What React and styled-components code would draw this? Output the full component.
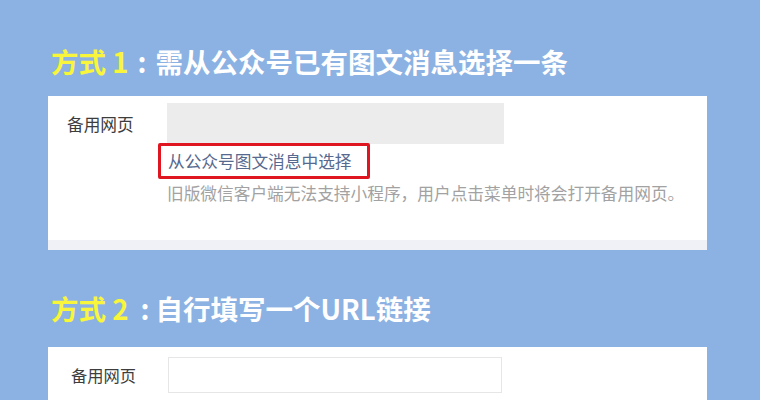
import React from 'react';
import styled, { createGlobalStyle } from 'styled-components';

const GlobalStyle = createGlobalStyle`
  html, body {
    margin: 0;
    padding: 0;
    background: #8bb2e2;
  }
  body {
    font-family: "Noto Sans CJK SC", "Noto Sans", sans-serif;
  }
`;

const Page = styled.div`
  width: 760px;
  height: 400px;
  overflow: hidden;
  box-sizing: border-box;
  padding-left: 48px;
  background: #8bb2e2;
`;

const Heading = styled.h2`
  margin: ${p => p.$top}px 0 ${p => p.$bottom}px 3px;
  height: 36px;
  line-height: 36px;
  font-size: 27.5px;
  font-weight: 700;
  color: #ffffff;
  white-space: nowrap;
`;

const Step = styled.span`
  color: #f8f53a;
`;

const Colon = styled.span`
  display: inline-block;
  margin: 0 ${p => p.$right}px 0 ${p => p.$left}px;
`;

const Card = styled.div`
  width: 659px;
  box-sizing: border-box;
  background: #ffffff;
  padding: ${p => p.$padTop}px 0 ${p => p.$padBottom}px ${p => p.$padLeft}px;
  border-bottom: ${p => (p.$strip ? '10px solid #eff1f6' : 'none')};
  display: grid;
  grid-template-columns: ${p => p.$labelWidth}px auto;
  align-items: center;
  justify-items: start;
`;

const Label = styled.div`
  font-size: ${p => p.$size}px;
  line-height: 22px;
  color: #3d3d3d;
`;

const Input = styled.div`
  width: ${p => p.$width}px;
  height: ${p => p.$height}px;
  box-sizing: border-box;
  background: ${p => (p.$filled ? '#ececec' : '#ffffff')};
  border: 1px solid ${p => (p.$filled ? '#ececec' : '#e6e6e6')};
`;

const Highlight = styled.div`
  grid-column: 2;
  margin: -1px 0 0 -9px;
  height: 36px;
  box-sizing: border-box;
  border: 3px solid #df1620;
  border-radius: 2px;
  padding: 0 15px 0 7px;
  display: flex;
  align-items: center;
`;

const Link = styled.span`
  font-size: 16.7px;
  color: #56698f;
  line-height: 28px;
`;

const Hint = styled.div`
  grid-column: 2;
  margin-top: 3px;
  font-size: 16.7px;
  line-height: 22px;
  color: #a2a2a2;
  white-space: nowrap;
`;

export default function App() {
  return (
    <Page>
      <GlobalStyle />
      <Heading $top={43} $bottom={17}>
        <Step>方式 1</Step>
        <Colon $left={9} $right={9}>:</Colon>需从公众号已有图文消息选择一条
      </Heading>
      <Card $padTop={7} $padBottom={36} $padLeft={19} $labelWidth={100} $strip>
        <Label $size={16.7}>备用网页</Label>
        <Input $width={337} $height={41} $filled />
        <Highlight>
          <Link>从公众号图文消息中选择</Link>
        </Highlight>
        <Hint>旧版微信客户端无法支持小程序，用户点击菜单时将会打开备用网页。</Hint>
      </Card>
      <Heading $top={40} $bottom={21}>
        <Step>方式 2</Step>
        <Colon $left={12} $right={6}>:</Colon>自行填写一个URL链接
      </Heading>
      <Card $padTop={10} $padBottom={20} $padLeft={23} $labelWidth={97}>
        <Label $size={16.3}>备用网页</Label>
        <Input $width={334} $height={36} />
      </Card>
    </Page>
  );
}
